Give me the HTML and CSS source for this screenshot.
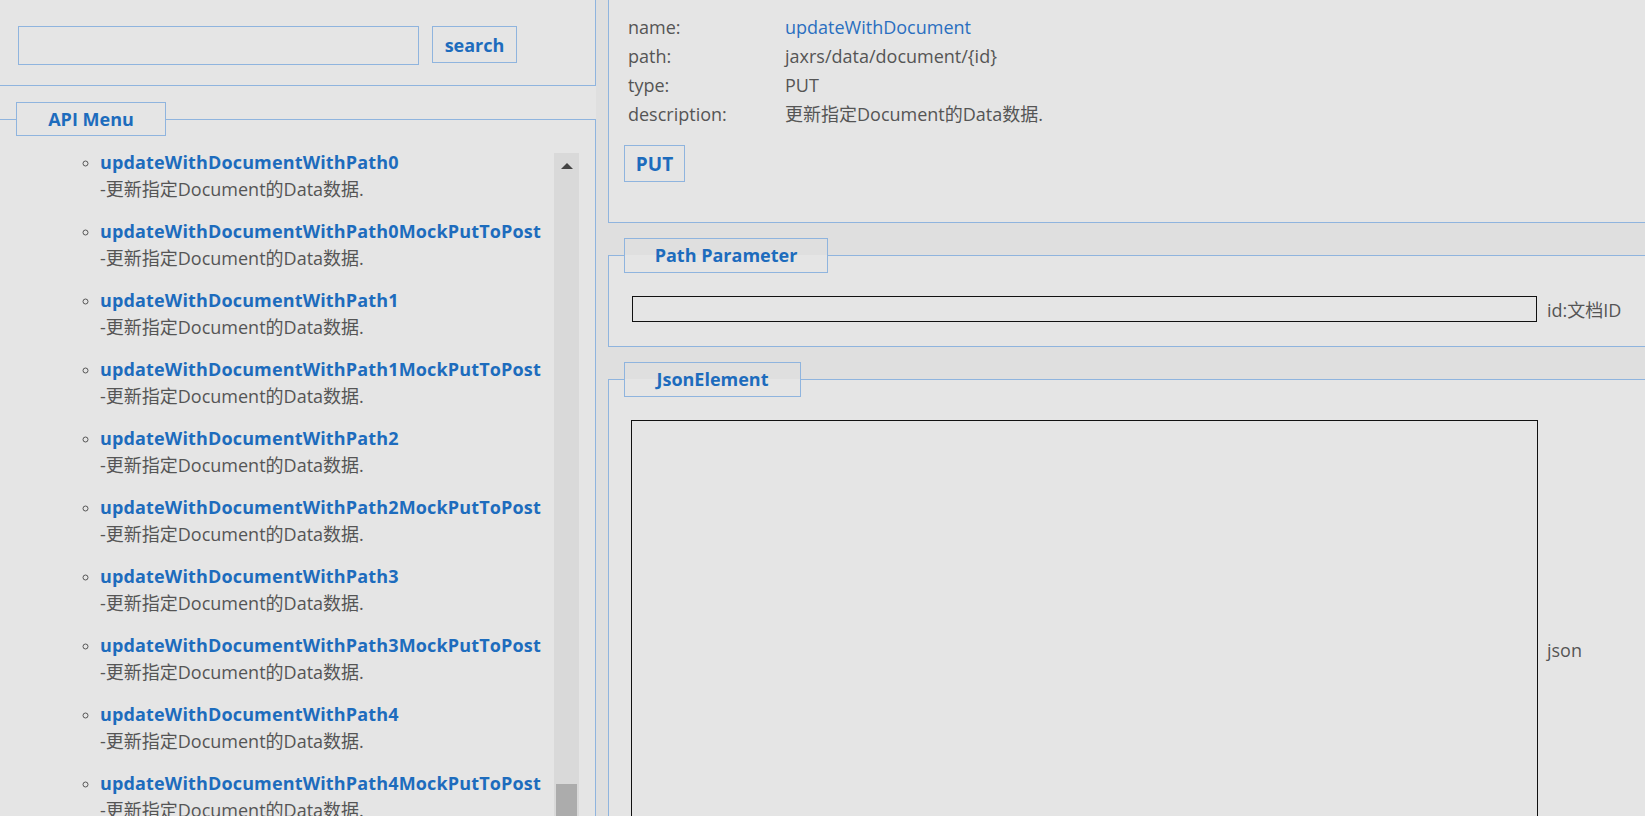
FILE: index.html
```html
<!DOCTYPE html>
<html lang="zh-CN">
<head>
<meta charset="utf-8">
<title>API</title>
<link rel="stylesheet" href="styles.css">
</head>
<body>
<div class="page">
  <div class="left">
    <div class="search-bar">
      <input class="search-input" type="text">
      <button class="btn search-btn">search</button>
    </div>
    <fieldset class="menu">
      <legend class="legend legend-menu"><span class="legend-text">API Menu</span></legend>
      <div class="menu-body">
        <ul class="api-list">
          <li><a class="api-link">updateWithDocumentWithPath0</a><div class="api-desc">-更新指定Document的Data数据.</div></li>
          <li><a class="api-link">updateWithDocumentWithPath0MockPutToPost</a><div class="api-desc">-更新指定Document的Data数据.</div></li>
          <li><a class="api-link">updateWithDocumentWithPath1</a><div class="api-desc">-更新指定Document的Data数据.</div></li>
          <li><a class="api-link">updateWithDocumentWithPath1MockPutToPost</a><div class="api-desc">-更新指定Document的Data数据.</div></li>
          <li><a class="api-link">updateWithDocumentWithPath2</a><div class="api-desc">-更新指定Document的Data数据.</div></li>
          <li><a class="api-link">updateWithDocumentWithPath2MockPutToPost</a><div class="api-desc">-更新指定Document的Data数据.</div></li>
          <li><a class="api-link">updateWithDocumentWithPath3</a><div class="api-desc">-更新指定Document的Data数据.</div></li>
          <li><a class="api-link">updateWithDocumentWithPath3MockPutToPost</a><div class="api-desc">-更新指定Document的Data数据.</div></li>
          <li><a class="api-link">updateWithDocumentWithPath4</a><div class="api-desc">-更新指定Document的Data数据.</div></li>
          <li><a class="api-link">updateWithDocumentWithPath4MockPutToPost</a><div class="api-desc">-更新指定Document的Data数据.</div></li>
          <li><a class="api-link">updateWithDocumentWithPath5</a><div class="api-desc">-更新指定Document的Data数据.</div></li>
        </ul>
        <div class="scrollbar">
          <span class="scroll-arrow"></span>
          <span class="scroll-thumb"></span>
        </div>
      </div>
    </fieldset>
  </div>

  <div class="right">
    <div class="info">
      <div class="info-grid">
        <span class="info-label">name:</span><span class="info-value info-name">updateWithDocument</span>
        <span class="info-label">path:</span><span class="info-value">jaxrs/data/document/{id}</span>
        <span class="info-label">type:</span><span class="info-value">PUT</span>
        <span class="info-label">description:</span><span class="info-value">更新指定Document的Data数据.</span>
      </div>
      <button class="btn put-btn">PUT</button>
    </div>

    <fieldset class="section">
      <legend class="legend legend-path"><span class="legend-text">Path Parameter</span></legend>
      <div class="param-row">
        <input class="param-input" type="text">
        <span class="param-label">id:文档ID</span>
      </div>
    </fieldset>

    <fieldset class="section">
      <legend class="legend legend-json"><span class="legend-text">JsonElement</span></legend>
      <div class="json-row">
        <textarea class="json-input"></textarea>
        <span class="param-label">json</span>
      </div>
    </fieldset>
  </div>
</div>
</body>
</html>
```

FILE: styles.css
```css
* { box-sizing: border-box; }

html, body {
  margin: 0;
  padding: 0;
  height: 816px;
  overflow: hidden;
}

body {
  background: #e5e5e5;
  font-family: "Open Sans", "Noto Sans CJK SC", sans-serif;
  font-size: 18px;
  color: #555;
}

.page {
  display: grid;
  grid-template-columns: 596px 1fr;
  height: 816px;
  overflow: hidden;
}

/* ---------- left ---------- */
.left {
  display: flex;
  flex-direction: column;
  min-width: 0;
  overflow: hidden;
}

.search-bar {
  height: 86px;
  flex: none;
  display: flex;
  align-items: flex-start;
  padding: 26px 0 0 18px;
  border-right: 1px solid #8fb4de;
  border-bottom: 1px solid #8fb4de;
}

.search-input {
  width: 401px;
  height: 39px;
  border: 1px solid #8fb4de;
  background: transparent;
  margin: 0;
}

.btn {
  background: transparent;
  border: 1px solid #8fb4de;
  color: #1d6cbd;
  font-family: "Open Sans", "Noto Sans CJK SC", sans-serif;
  font-weight: 700;
  font-size: 18px;
  padding: 0;
  margin: 0;
}

.search-btn {
  margin-left: 13px;
  width: 85px;
  height: 37px;
}

.menu {
  margin: 16px 0 0 0;
  padding: 0;
  min-width: 0;
  border: 1px solid #8fb4de;
  border-left: none;
  border-bottom: none;
  flex: 1;
}

.legend {
  height: 34px;
  border: 1px solid #8fb4de;
  padding: 0;
  text-align: left;
  line-height: 32px;
  color: #1d6cbd;
  font-weight: 700;
  font-size: 18px;
}

.legend-text {
  display: block;
  text-align: center;
}

.legend-menu {
  margin-left: 16px;
  width: 150px;
}

.menu-body {
  display: flex;
  margin-top: 13px;
  height: 668px;
  overflow: hidden;
}

.api-list {
  flex: 1;
  margin: 0;
  padding: 0 0 0 100px;
  list-style: circle;
  min-width: 0;
}

.api-list li {
  margin-bottom: 15px;
  line-height: 27px;
}

.api-list li::marker {
  font-size: 14px;
}

.api-link {
  display: block;
  color: #1d6cbd;
  font-weight: 700;
  letter-spacing: 0.15px;
  white-space: nowrap;
}

.api-desc {
  color: #555;
  white-space: nowrap;
}

.scrollbar {
  flex: none;
  width: 25px;
  margin: 4px 16px 0 0;
  background: #d9d9d9;
  display: flex;
  flex-direction: column;
  align-items: center;
}

.scroll-arrow {
  margin-top: 10px;
  width: 0;
  height: 0;
  border-left: 6px solid transparent;
  border-right: 6px solid transparent;
  border-bottom: 6px solid #444;
}

.scroll-thumb {
  margin-top: auto;
  width: 21px;
  height: 33px;
  background: #acacac;
}

/* ---------- right ---------- */
.right {
  background: #dfdfdf;
  padding-left: 12px;
  min-width: 0;
  overflow: hidden;
}

.info {
  height: 223px;
  background: #e5e5e5;
  border-left: 1px solid #8fb4de;
  border-bottom: 1px solid #8fb4de;
  padding: 13px 0 0 19px;
}

.info-grid {
  display: grid;
  grid-template-columns: 157px 1fr;
  line-height: 29px;
}

.info-label { color: #555; }
.info-value { color: #555; }
.info-name { color: #2a6fc0; }

.put-btn {
  display: block;
  margin: 16px 0 0 -4px;
  width: 61px;
  height: 37px;
  font-size: 19px;
}

.section {
  margin: 15px 0 0 0;
  padding: 0;
  min-width: 0;
  border: 1px solid #8fb4de;
  border-right: none;
  background: #e5e5e5;
}

.legend-path {
  margin-left: 15px;
  width: 204px;
  height: 35px;
  line-height: 33px;
}

.legend-json {
  margin-left: 15px;
  width: 177px;
  height: 35px;
  line-height: 33px;
}

.param-row {
  display: flex;
  align-items: center;
  padding: 23px 0 24px 23px;
}

.param-input {
  width: 905px;
  height: 26px;
  border: 1px solid #111;
  background: transparent;
  margin: 0;
}

.param-label {
  margin-left: 10px;
  color: #555;
  white-space: nowrap;
}

.json-row {
  display: flex;
  align-items: center;
  padding: 23px 0 0 22px;
}

.json-input {
  width: 907px;
  height: 460px;
  border: 1px solid #111;
  background: transparent;
  margin: 0;
  resize: none;
  flex: none;
}

.json-row .param-label {
  margin-left: 9px;
}
```
